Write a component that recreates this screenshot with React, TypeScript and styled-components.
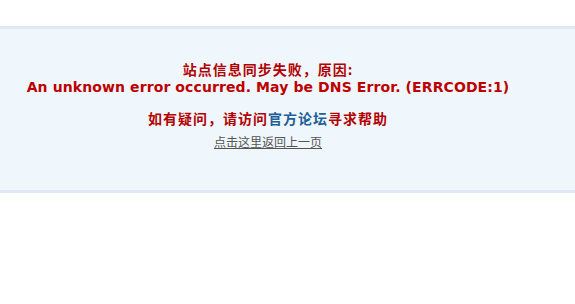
import React from 'react';
import styled, { createGlobalStyle } from 'styled-components';

const GlobalStyle = createGlobalStyle`
  html, body {
    margin: 0;
    padding: 0;
    background: #ffffff;
  }
  body {
    font-family: "Noto Sans CJK SC", "DejaVu Sans", sans-serif;
  }
`;

const Page = styled.div`
  padding-top: 26px;
`;

const MessageBox = styled.div`
  box-sizing: border-box;
  height: 167px;
  background: #f0f7fc;
  border-top: 3px solid #dde9f5;
  border-bottom: 3px solid #dde9f5;
  padding: 31px 39px 0 0;
  text-align: center;
`;

const Title = styled.div`
  font-family: "Noto Sans CJK SC", sans-serif;
  font-size: 14px;
  font-weight: 700;
  letter-spacing: 1px;
  line-height: 18px;
  color: #b30000;
`;

const Reason = styled.div`
  font-family: "DejaVu Sans", "Liberation Sans", sans-serif;
  font-size: 14px;
  font-weight: 700;
  letter-spacing: 0.1px;
  line-height: 18px;
  color: #bd0000;
`;

const Help = styled.div`
  margin-top: 13px;
  font-family: "Noto Sans CJK SC", sans-serif;
  font-size: 14px;
  font-weight: 700;
  letter-spacing: 1px;
  line-height: 18px;
  color: #b30000;
`;

const ForumLink = styled.a`
  color: #225f97;
  text-decoration: none;
`;

const BackLink = styled.a`
  display: inline-block;
  margin-top: 7px;
  font-family: "Noto Sans CJK SC", sans-serif;
  font-size: 12px;
  line-height: 16px;
  color: #555555;
  text-decoration: underline;
`;

function App() {
  return (
    <>
      <GlobalStyle />
      <Page>
        <MessageBox>
          <Title>站点信息同步失败，原因:</Title>
          <Reason>An unknown error occurred. May be DNS Error. (ERRCODE:1)</Reason>
          <Help>
            如有疑问，请访问<ForumLink href="#">官方论坛</ForumLink>寻求帮助
          </Help>
          <BackLink href="#">点击这里返回上一页</BackLink>
        </MessageBox>
      </Page>
    </>
  );
}

export default App;
